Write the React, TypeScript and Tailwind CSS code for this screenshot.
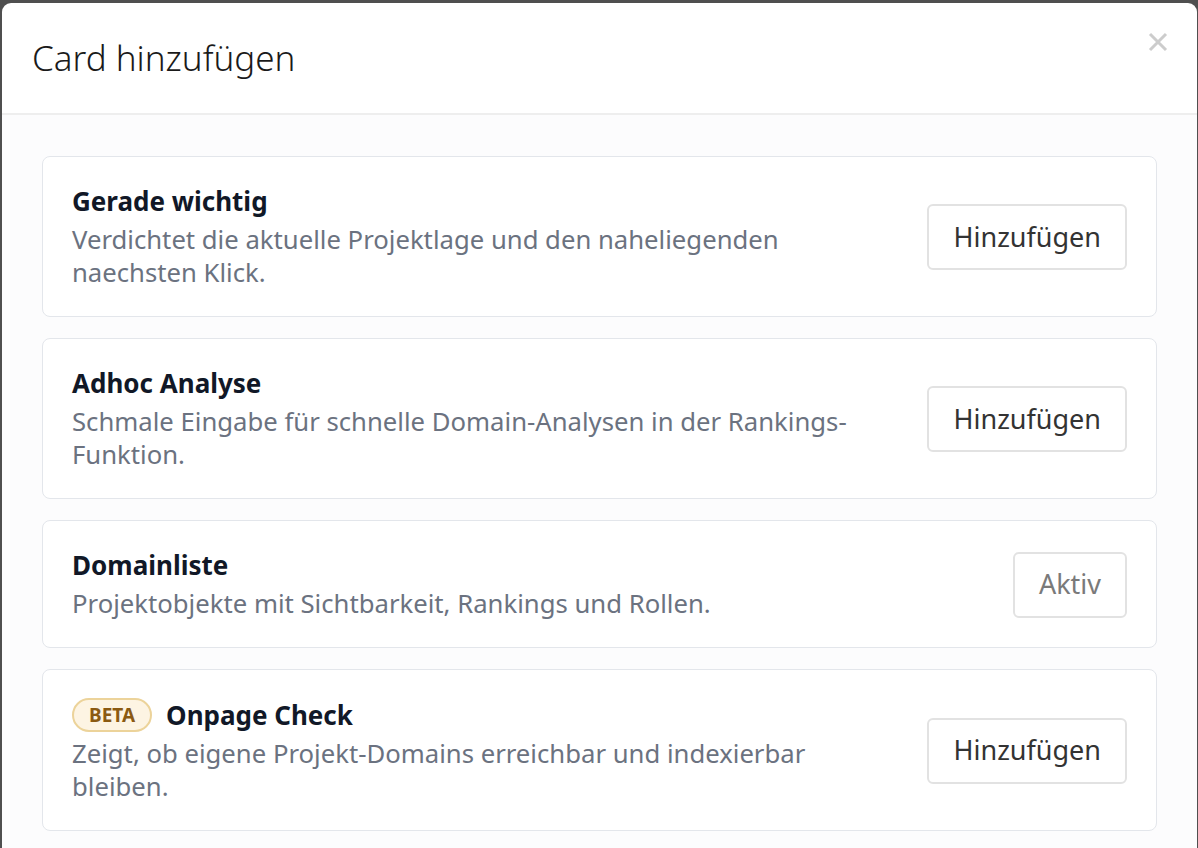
import React from "react";

type CardItem = {
  title: string;
  description: string;
  beta?: boolean;
  active?: boolean;
};

const cards: CardItem[] = [
  {
    title: "Gerade wichtig",
    description:
      "Verdichtet die aktuelle Projektlage und den naheliegenden naechsten Klick.",
  },
  {
    title: "Adhoc Analyse",
    description:
      "Schmale Eingabe für schnelle Domain-Analysen in der Rankings-Funktion.",
  },
  {
    title: "Domainliste",
    description: "Projektobjekte mit Sichtbarkeit, Rankings und Rollen.",
    active: true,
  },
  {
    title: "Onpage Check",
    description:
      "Zeigt, ob eigene Projekt-Domains erreichbar und indexierbar bleiben.",
    beta: true,
  },
];

function CardRow({ item }: { item: CardItem }) {
  return (
    <div className="flex items-center gap-16 rounded-[8px] border border-[#e3e6eb] bg-white pl-[29px] pr-[29px] pt-[28px] pb-[27px]">
      <div className="flex-1">
        <div className="flex items-center gap-[14px]">
          {item.beta && (
            <span className="flex h-[34px] items-center rounded-full border-2 border-[#ecd39a] bg-[#fdf4e3] px-[15px] text-[19px] font-bold leading-none text-[#8b5a12]">
              BETA
            </span>
          )}
          <h3 className="text-[26px] font-bold leading-[33px] text-[#111827]">
            {item.title}
          </h3>
        </div>
        <p className="mt-[5px] text-[25.7px] leading-[33px] text-[#6b7280]">
          {item.description}
        </p>
      </div>
      {item.active ? (
        <button className="h-[66px] rounded-[6px] border-2 border-[#e2e2e2] bg-white px-[24px] text-[27px] text-[#7a7a7a]">
          Aktiv
        </button>
      ) : (
        <button className="h-[66px] rounded-[6px] border-2 border-[#e2e2e2] bg-white px-[24px] text-[27px] text-[#333333]">
          Hinzufügen
        </button>
      )}
    </div>
  );
}

export default function App() {
  return (
    <div
      className="h-[848px] w-[1198px] overflow-hidden bg-[#4f4f4f] pl-[2px] pr-px pt-[3px]"
      style={{ fontFamily: '"Noto Sans", "Open Sans", sans-serif' }}
    >
      <div className="flex h-full flex-col overflow-hidden rounded-t-[9px] bg-white">
        <header className="flex h-[112px] shrink-0 items-center justify-between border-b-2 border-[#eeeeee] pl-[30px] pr-[28px]">
          <h2 className="text-[35px] font-light text-[#1a1a1a]">Card hinzufügen</h2>
          <button className="mb-[32px] text-[#cccccc]" aria-label="Schließen">
            <svg width="22" height="22" viewBox="0 0 22 22" fill="none">
              <path
                d="M3 3 L19 19 M19 3 L3 19"
                stroke="currentColor"
                strokeWidth="3"
                strokeLinecap="butt"
              />
            </svg>
          </button>
        </header>
        <div className="flex flex-1 flex-col gap-[21px] bg-[#fcfcfd] px-[40px] pt-[41px]">
          {cards.map((c) => (
            <CardRow key={c.title} item={c} />
          ))}
        </div>
      </div>
    </div>
  );
}
